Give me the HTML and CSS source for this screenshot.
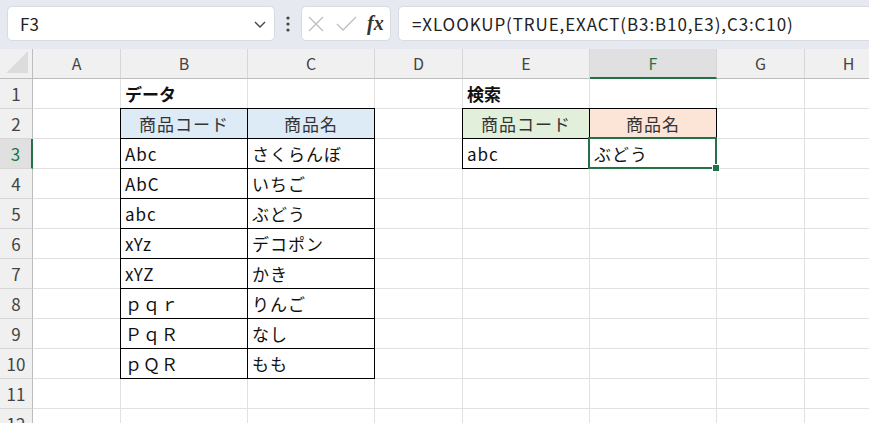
FILE: index.html
```html
<!DOCTYPE html>
<html lang="ja">
<head>
    <meta charset="UTF-8">
    <title>XLOOKUP EXACT</title>
    <link rel="stylesheet" href="styles.css">
</head>
<body>
    <!-- formula bar -->
    <div class="toolbar">
        <div class="namebox">
            <span>F3</span>
            <svg width="14" height="10" viewBox="0 0 14 10"><path d="M2 3 L7 8 L12 3" fill="none" stroke="#444" stroke-width="1.4"/></svg>
        </div>
        <div class="more">
            <svg width="6" height="18" viewBox="0 0 6 18"><circle cx="3" cy="3" r="1.6" fill="#444"/><circle cx="3" cy="9" r="1.6" fill="#444"/><circle cx="3" cy="15" r="1.6" fill="#444"/></svg>
        </div>
        <div class="fxbox">
            <svg width="16" height="16" viewBox="0 0 16 16"><path d="M1 1 L15 15 M15 1 L1 15" stroke="#bdbdbd" stroke-width="1.3"/></svg>
            <svg width="21" height="16" viewBox="0 0 21 16"><path d="M1 8 L7 14 L20 1" fill="none" stroke="#bdbdbd" stroke-width="1.3"/></svg>
            <span class="fx">fx</span>
        </div>
        <div class="formula">=XLOOKUP(TRUE,EXACT(B3:B10,E3),C3:C10)</div>
    </div>

    <!-- sheet -->
    <div class="sheet">
        <div class="corner"><svg width="22" height="22" viewBox="0 0 22 22"><path d="M22 0 L22 22 L0 22 Z" fill="#dcdcdc"/></svg></div>
        <div class="colhdr">A</div>
        <div class="colhdr">B</div>
        <div class="colhdr">C</div>
        <div class="colhdr">D</div>
        <div class="colhdr">E</div>
        <div class="colhdr active">F</div>
        <div class="colhdr">G</div>
        <div class="colhdr">H</div>

        <div class="rowhdr">1</div>
        <div class="cell"></div><div class="cell bold">データ</div><div class="cell"></div><div class="cell"></div>
        <div class="cell bold">検索</div><div class="cell"></div><div class="cell"></div><div class="cell"></div>

        <div class="rowhdr">2</div>
        <div class="cell"></div><div class="cell tbl blue ctr">商品コード</div><div class="cell tbl blue ctr">商品名</div><div class="cell"></div>
        <div class="cell tbl green ctr">商品コード</div><div class="cell tbl orange ctr">商品名</div><div class="cell"></div><div class="cell"></div>

        <div class="rowhdr active">3</div>
        <div class="cell"></div><div class="cell tbl">Abc</div><div class="cell tbl">さくらんぼ</div><div class="cell"></div>
        <div class="cell tbl">abc</div><div class="cell tbl sel">ぶどう</div><div class="cell"></div><div class="cell"></div>

        <div class="rowhdr">4</div>
        <div class="cell"></div><div class="cell tbl">AbC</div><div class="cell tbl">いちご</div><div class="cell"></div>
        <div class="cell"></div><div class="cell"></div><div class="cell"></div><div class="cell"></div>

        <div class="rowhdr">5</div>
        <div class="cell"></div><div class="cell tbl">abc</div><div class="cell tbl">ぶどう</div><div class="cell"></div>
        <div class="cell"></div><div class="cell"></div><div class="cell"></div><div class="cell"></div>

        <div class="rowhdr">6</div>
        <div class="cell"></div><div class="cell tbl">xYz</div><div class="cell tbl">デコポン</div><div class="cell"></div>
        <div class="cell"></div><div class="cell"></div><div class="cell"></div><div class="cell"></div>

        <div class="rowhdr">7</div>
        <div class="cell"></div><div class="cell tbl">xYZ</div><div class="cell tbl">かき</div><div class="cell"></div>
        <div class="cell"></div><div class="cell"></div><div class="cell"></div><div class="cell"></div>

        <div class="rowhdr">8</div>
        <div class="cell"></div><div class="cell tbl">ｐｑｒ</div><div class="cell tbl">りんご</div><div class="cell"></div>
        <div class="cell"></div><div class="cell"></div><div class="cell"></div><div class="cell"></div>

        <div class="rowhdr">9</div>
        <div class="cell"></div><div class="cell tbl">ＰｑＲ</div><div class="cell tbl">なし</div><div class="cell"></div>
        <div class="cell"></div><div class="cell"></div><div class="cell"></div><div class="cell"></div>

        <div class="rowhdr">10</div>
        <div class="cell"></div><div class="cell tbl">ｐＱＲ</div><div class="cell tbl">もも</div><div class="cell"></div>
        <div class="cell"></div><div class="cell"></div><div class="cell"></div><div class="cell"></div>

        <div class="rowhdr">11</div>
        <div class="cell"></div><div class="cell"></div><div class="cell"></div><div class="cell"></div>
        <div class="cell"></div><div class="cell"></div><div class="cell"></div><div class="cell"></div>

        <div class="rowhdr">12</div>
        <div class="cell"></div><div class="cell"></div><div class="cell"></div><div class="cell"></div>
        <div class="cell"></div><div class="cell"></div><div class="cell"></div><div class="cell"></div>
    </div>
</body>
</html>
```

FILE: styles.css
```css
body {
    margin: 0;
    background-color: white;
    font-family: "Noto Sans CJK JP", sans-serif;
    overflow: hidden;
}

/* formula bar */
.toolbar {
    height: 49px;
    box-sizing: border-box;
    background-color: #e6e9f0;
    display: flex;
    align-items: flex-start;
    padding: 6px 0 0 7px;
}

.namebox {
    width: 268px;
    height: 35px;
    box-sizing: border-box;
    background-color: white;
    border: 1px solid #d8dbe2;
    border-radius: 5px;
    display: flex;
    align-items: center;
    justify-content: space-between;
    padding: 0 7px 0 12px;
    font-size: 17px;
    color: #222;
}

.more {
    width: 26px;
    height: 35px;
    display: flex;
    align-items: center;
    justify-content: center;
}

.fxbox {
    width: 90px;
    height: 35px;
    box-sizing: border-box;
    background-color: white;
    border: 1px solid #d8dbe2;
    border-radius: 5px;
    display: flex;
    align-items: center;
    gap: 12px;
    padding-left: 6px;
}

.fx {
    font-family: "Liberation Serif", serif;
    font-style: italic;
    font-weight: bold;
    font-size: 20px;
    color: #333;
    margin-left: -2px;
}

.formula {
    flex: 1;
    height: 35px;
    box-sizing: border-box;
    margin-left: 7px;
    background-color: white;
    border: 1px solid #d8dbe2;
    border-right: none;
    border-radius: 5px 0 0 5px;
    padding-left: 13px;
    font-size: 17px;
    letter-spacing: 0.9px;
    line-height: 33px;
    color: #222;
    white-space: nowrap;
}

/* grid */
.sheet {
    display: grid;
    grid-template-columns: 33px 88px 127px 127px 88px 127px 127px 88px 88px;
    grid-auto-rows: 30px;
}

.sheet > div {
    box-sizing: border-box;
}

.corner {
    background-color: #f0f0f0;
    border-right: 1px solid #bdbdbd;
    border-bottom: 1px solid #bdbdbd;
    display: flex;
    align-items: flex-end;
    padding: 0 0 5px 6px;
}

.colhdr {
    background-color: #f0f0f0;
    border-right: 1px solid #d6d6d6;
    border-bottom: 1px solid #bdbdbd;
    text-align: center;
    font-size: 16px;
    line-height: 29px;
    color: #444;
}

.colhdr.active {
    background-color: #e0e0e0;
    border-bottom: 2px solid #217346;
    color: #217346;
}

.rowhdr {
    background-color: #f0f0f0;
    border-right: 1px solid #bdbdbd;
    border-bottom: 1px solid #d6d6d6;
    text-align: center;
    font-size: 17px;
    line-height: 29px;
    color: #444;
}

.rowhdr.active {
    background-color: #e0e0e0;
    border-right: 2px solid #217346;
    color: #217346;
}

.cell {
    border-right: 1px solid #e1e1e1;
    border-bottom: 1px solid #e1e1e1;
    font-size: 17px;
    letter-spacing: 1px;
    line-height: 29px;
    padding-left: 4px;
    color: #111;
    white-space: nowrap;
}

.bold {
    font-weight: bold;
    letter-spacing: 0;
}

.ctr {
    text-align: center;
    padding-left: 0;
    color: #333;
}

.tbl {
    border-right-color: #000;
    border-bottom-color: #000;
    box-shadow: -1px 0 0 #000, 0 -1px 0 #000, -1px -1px 0 #000;
}

.blue {
    background-color: #ddebf7;
}

.green {
    background-color: #e2efda;
}

.orange {
    background-color: #fce4d6;
}

.sel {
    position: relative;
}

.sel::before {
    content: "";
    position: absolute;
    left: -2px;
    top: -2px;
    right: -1px;
    bottom: -1px;
    border: 2px solid #217346;
}

.sel::after {
    content: "";
    position: absolute;
    right: -4px;
    bottom: -4px;
    width: 6px;
    height: 6px;
    background-color: #217346;
    border: 1px solid white;
}
```
